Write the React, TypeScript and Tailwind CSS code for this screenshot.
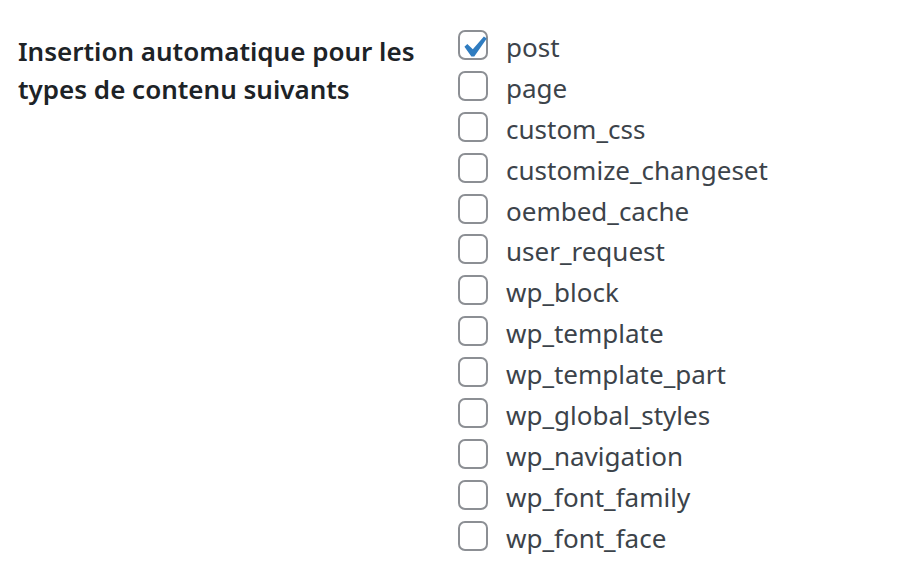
const POST_TYPES = [
  'post',
  'page',
  'custom_css',
  'customize_changeset',
  'oembed_cache',
  'user_request',
  'wp_block',
  'wp_template',
  'wp_template_part',
  'wp_global_styles',
  'wp_navigation',
  'wp_font_family',
  'wp_font_face',
];

const CHECKED = ['post'];

function Checkbox({ checked }: { checked: boolean }) {
  return (
    <span className="relative mt-[4px] block h-[30px] w-[30px] shrink-0 rounded-[7px] border-2 border-[#8c8f94] bg-white">
      {checked && (
        <svg viewBox="0 0 20 20" className="absolute -left-[8px] -top-[6px] h-[43px] w-[43px]">
          <path d="M14.83 4.89l1.34.94-5.81 8.38H9.02L5.78 9.67l1.34-1.25 2.57 2.4z" fill="#2f7cc0" />
        </svg>
      )}
    </span>
  );
}

export default function App() {
  return (
    <div
      className="min-h-screen bg-white pl-[18px] pt-[26px]"
      style={{ fontFamily: '"Noto Sans", "Open Sans", sans-serif' }}
    >
      <div className="flex">
        <div className="w-[440px] pt-[6px] text-[26px] font-semibold leading-[38px] text-[#1d2327]">
          Insertion automatique pour les types de contenu suivants
        </div>
        <fieldset className="flex flex-col">
          {POST_TYPES.map((type) => (
            <label key={type} className="flex h-[40.9px] items-start gap-[18px] text-[26px] leading-[41px] text-[#3c434a]">
              <Checkbox checked={CHECKED.includes(type)} />
              <span className="pt-[1px]">{type}</span>
            </label>
          ))}
        </fieldset>
      </div>
    </div>
  );
}
